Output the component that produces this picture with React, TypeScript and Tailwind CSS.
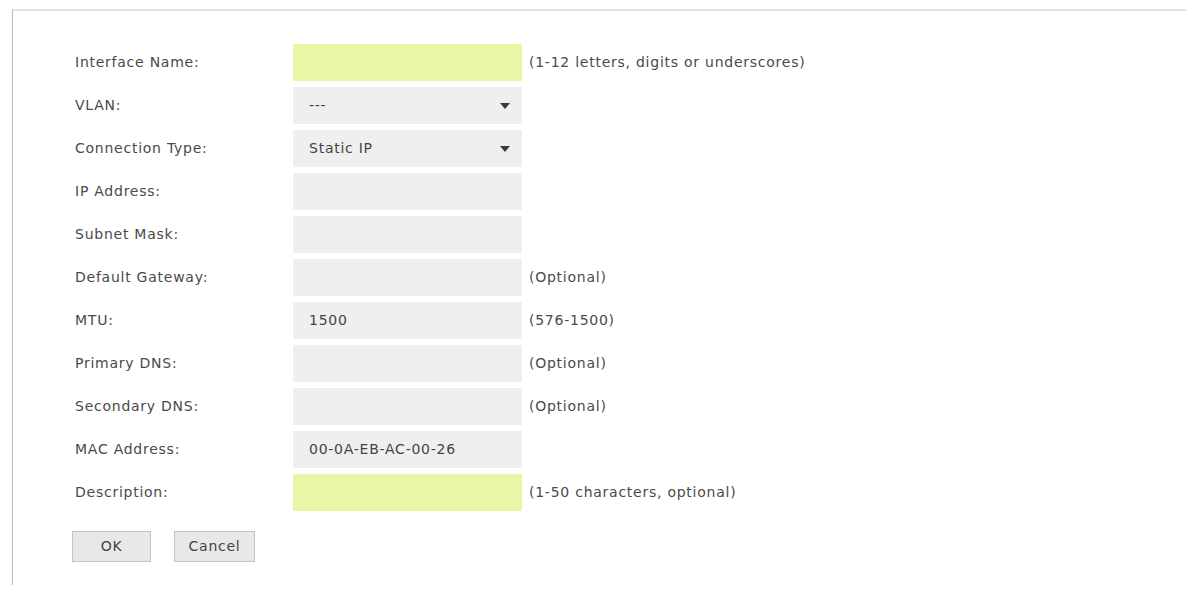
const rows: { label: string; value?: string; hint?: string; kind?: "yellow" | "select" | "plain" }[] = [
  { label: "Interface Name:", kind: "yellow", hint: "(1-12 letters, digits or underscores)" },
  { label: "VLAN:", kind: "select", value: "---" },
  { label: "Connection Type:", kind: "select", value: "Static IP" },
  { label: "IP Address:" },
  { label: "Subnet Mask:" },
  { label: "Default Gateway:", hint: "(Optional)" },
  { label: "MTU:", value: "1500", hint: "(576-1500)" },
  { label: "Primary DNS:", hint: "(Optional)" },
  { label: "Secondary DNS:", hint: "(Optional)" },
  { label: "MAC Address:", value: "00-0A-EB-AC-00-26" },
  { label: "Description:", kind: "yellow", hint: "(1-50 characters, optional)" },
];

function Field({ kind, value }: { kind?: string; value?: string }) {
  const bg = kind === "yellow" ? "bg-[#eaf5a6]" : "bg-[#efefef]";
  return (
    <div className={`flex h-[37px] w-[229px] items-center justify-between pl-[16px] pr-[12px] ${bg}`}>
      <span className="text-[#444]">{value}</span>
      {kind === "select" && (
        <svg width="10" height="6" viewBox="0 0 10 6">
          <path d="M0 0 H10 L5 6 Z" fill="#2e3d48" />
        </svg>
      )}
    </div>
  );
}

export default function App() {
  return (
    <div
      className="h-[590px] w-[1189px] overflow-hidden bg-white pt-[9px] pl-[12px] text-[14px] tracking-[0.75px]"
      style={{ fontFamily: '"DejaVu Sans", Verdana, sans-serif' }}
    >
      <div className="h-[576px] w-[1174px] border-t-2 border-l border-t-[#e0e0e0] border-l-[#b3bfbf] pt-[33px] pl-[62px]">
        <div className="flex flex-col gap-[6px]">
          {rows.map((r) => (
            <div key={r.label} className="flex items-center">
              <div className="w-[218px] text-[#4a4a4a]">{r.label}</div>
              <Field kind={r.kind} value={r.value} />
              {r.hint && <div className="pl-[7px] text-[#4a4a4a]">{r.hint}</div>}
            </div>
          ))}
        </div>
        <div className="mt-[20px] ml-[-3px] flex gap-[23px]">
          <button className="h-[31px] w-[79px] border border-[#c4c4c4] bg-[#e8e8e8] text-[#444]">OK</button>
          <button className="h-[31px] w-[81px] border border-[#c4c4c4] bg-[#e8e8e8] text-[#444]">Cancel</button>
        </div>
      </div>
    </div>
  );
}
